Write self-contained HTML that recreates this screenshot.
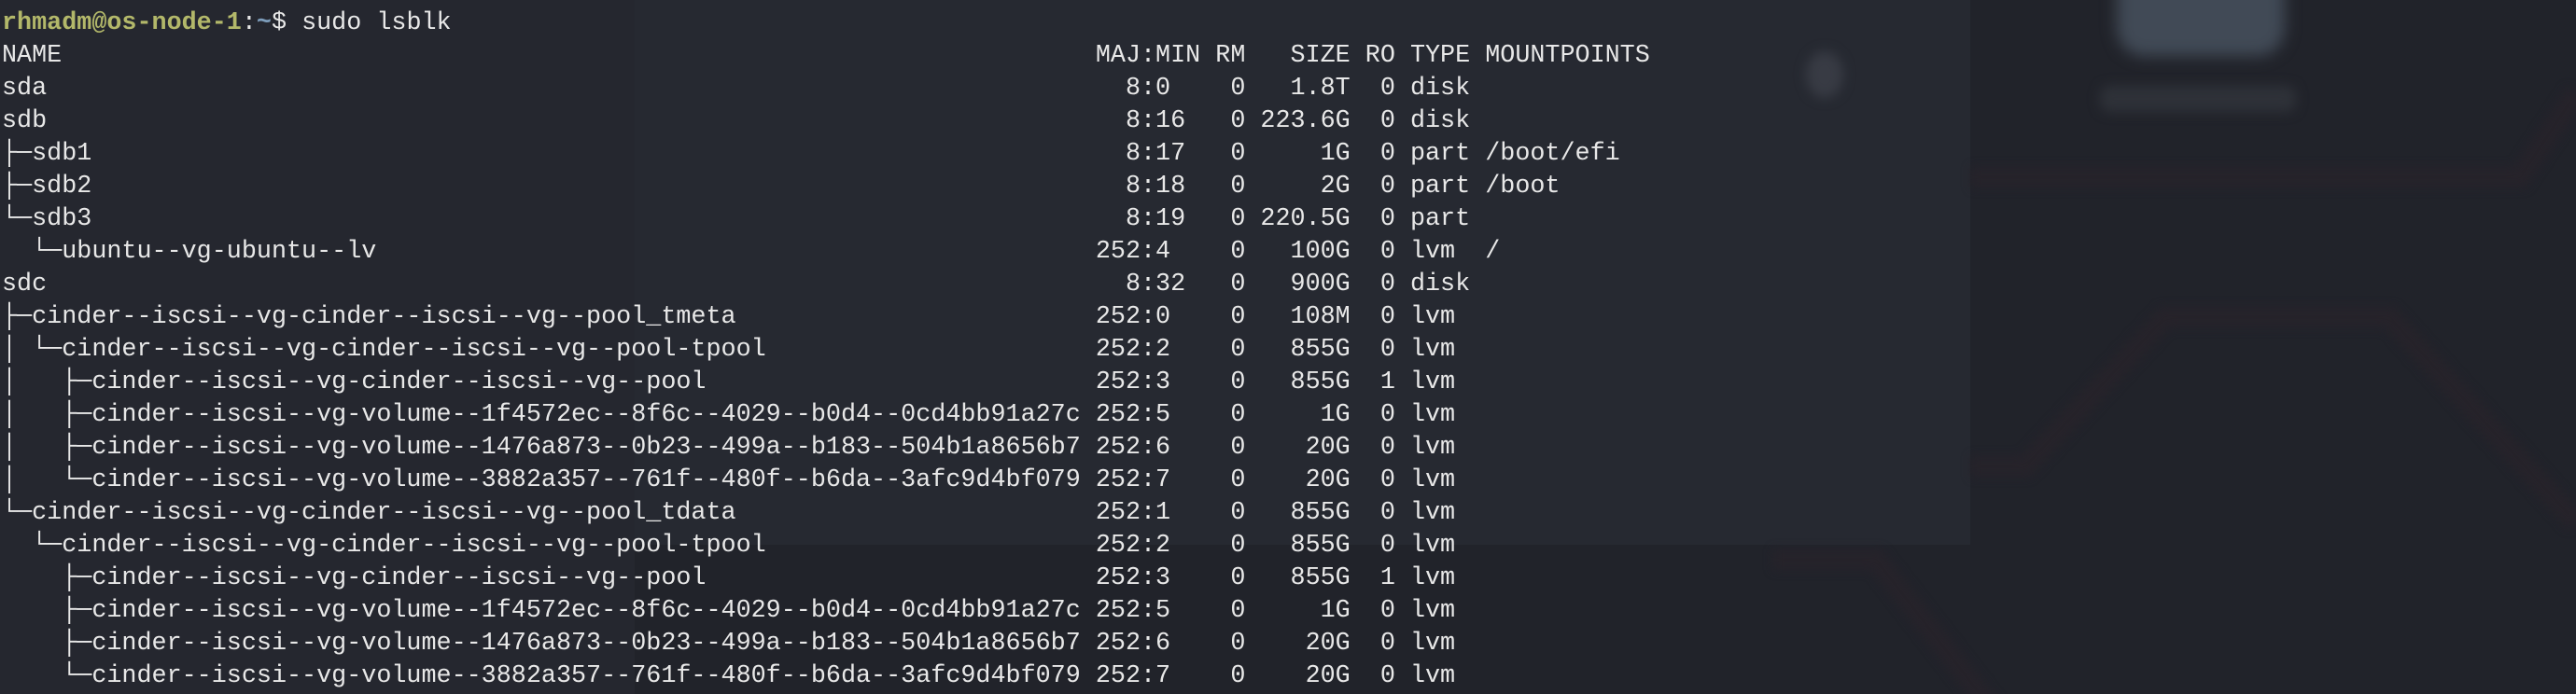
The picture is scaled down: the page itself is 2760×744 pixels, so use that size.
<!DOCTYPE html>
<html><head><meta charset="utf-8"><style>
html,body{margin:0;padding:0;width:2760px;height:744px;overflow:hidden;background:#21232a;position:relative;}
.lft{position:absolute;left:0;top:0;width:680px;height:744px;background:#25272f;}
.win{position:absolute;left:680px;top:0;width:1431px;height:584px;background:#262931;}
.icon{position:absolute;left:2268px;top:-40px;width:180px;height:100px;border-radius:30px;background:#414a56;filter:blur(8px);}
.lbl{position:absolute;left:2250px;top:92px;width:210px;height:28px;background:#2e3138;filter:blur(6px);border-radius:10px;}
.dot{position:absolute;left:1935px;top:55px;width:40px;height:50px;border-radius:50%;background:#383b44;filter:blur(6px);}
pre{position:absolute;left:2px;top:8px;height:736px;overflow:hidden;margin:0;font-family:"Liberation Mono",monospace;font-size:26.75px;line-height:35px;color:#e8e8e8;white-space:pre;}
.g{color:#b3b86a;font-weight:bold}.b{color:#7d9dbb;font-weight:bold}
</style></head><body>
<div class="lft"></div>
<div class="win"></div>
<svg style="position:absolute;left:0;top:0" width="2760" height="744"><g fill="none" stroke="#26232a" stroke-width="22" style="filter:blur(5px)">
<path d="M2112 190 L2700 190 L2760 100"/>
<path d="M2112 500 L2170 500 L2320 340 L2560 340 L2760 560"/>
<path d="M1900 600 L2010 600 L2180 820"/>
</g></svg>
<div class="icon"></div><div class="lbl"></div><div class="dot"></div>
<pre><span class="g">rhmadm@os-node-1</span>:<span class="b">~</span>$ sudo lsblk
NAME                                                                     MAJ:MIN RM   SIZE RO TYPE MOUNTPOINTS
sda                                                                        8:0    0   1.8T  0 disk 
sdb                                                                        8:16   0 223.6G  0 disk 
├─sdb1                                                                     8:17   0     1G  0 part /boot/efi
├─sdb2                                                                     8:18   0     2G  0 part /boot
└─sdb3                                                                     8:19   0 220.5G  0 part 
  └─ubuntu--vg-ubuntu--lv                                                252:4    0   100G  0 lvm  /
sdc                                                                        8:32   0   900G  0 disk 
├─cinder--iscsi--vg-cinder--iscsi--vg--pool_tmeta                        252:0    0   108M  0 lvm  
│ └─cinder--iscsi--vg-cinder--iscsi--vg--pool-tpool                      252:2    0   855G  0 lvm  
│   ├─cinder--iscsi--vg-cinder--iscsi--vg--pool                          252:3    0   855G  1 lvm  
│   ├─cinder--iscsi--vg-volume--1f4572ec--8f6c--4029--b0d4--0cd4bb91a27c 252:5    0     1G  0 lvm  
│   ├─cinder--iscsi--vg-volume--1476a873--0b23--499a--b183--504b1a8656b7 252:6    0    20G  0 lvm  
│   └─cinder--iscsi--vg-volume--3882a357--761f--480f--b6da--3afc9d4bf079 252:7    0    20G  0 lvm  
└─cinder--iscsi--vg-cinder--iscsi--vg--pool_tdata                        252:1    0   855G  0 lvm  
  └─cinder--iscsi--vg-cinder--iscsi--vg--pool-tpool                      252:2    0   855G  0 lvm  
    ├─cinder--iscsi--vg-cinder--iscsi--vg--pool                          252:3    0   855G  1 lvm  
    ├─cinder--iscsi--vg-volume--1f4572ec--8f6c--4029--b0d4--0cd4bb91a27c 252:5    0     1G  0 lvm  
    ├─cinder--iscsi--vg-volume--1476a873--0b23--499a--b183--504b1a8656b7 252:6    0    20G  0 lvm  
    └─cinder--iscsi--vg-volume--3882a357--761f--480f--b6da--3afc9d4bf079 252:7    0    20G  0 lvm  </pre>
</body></html>
